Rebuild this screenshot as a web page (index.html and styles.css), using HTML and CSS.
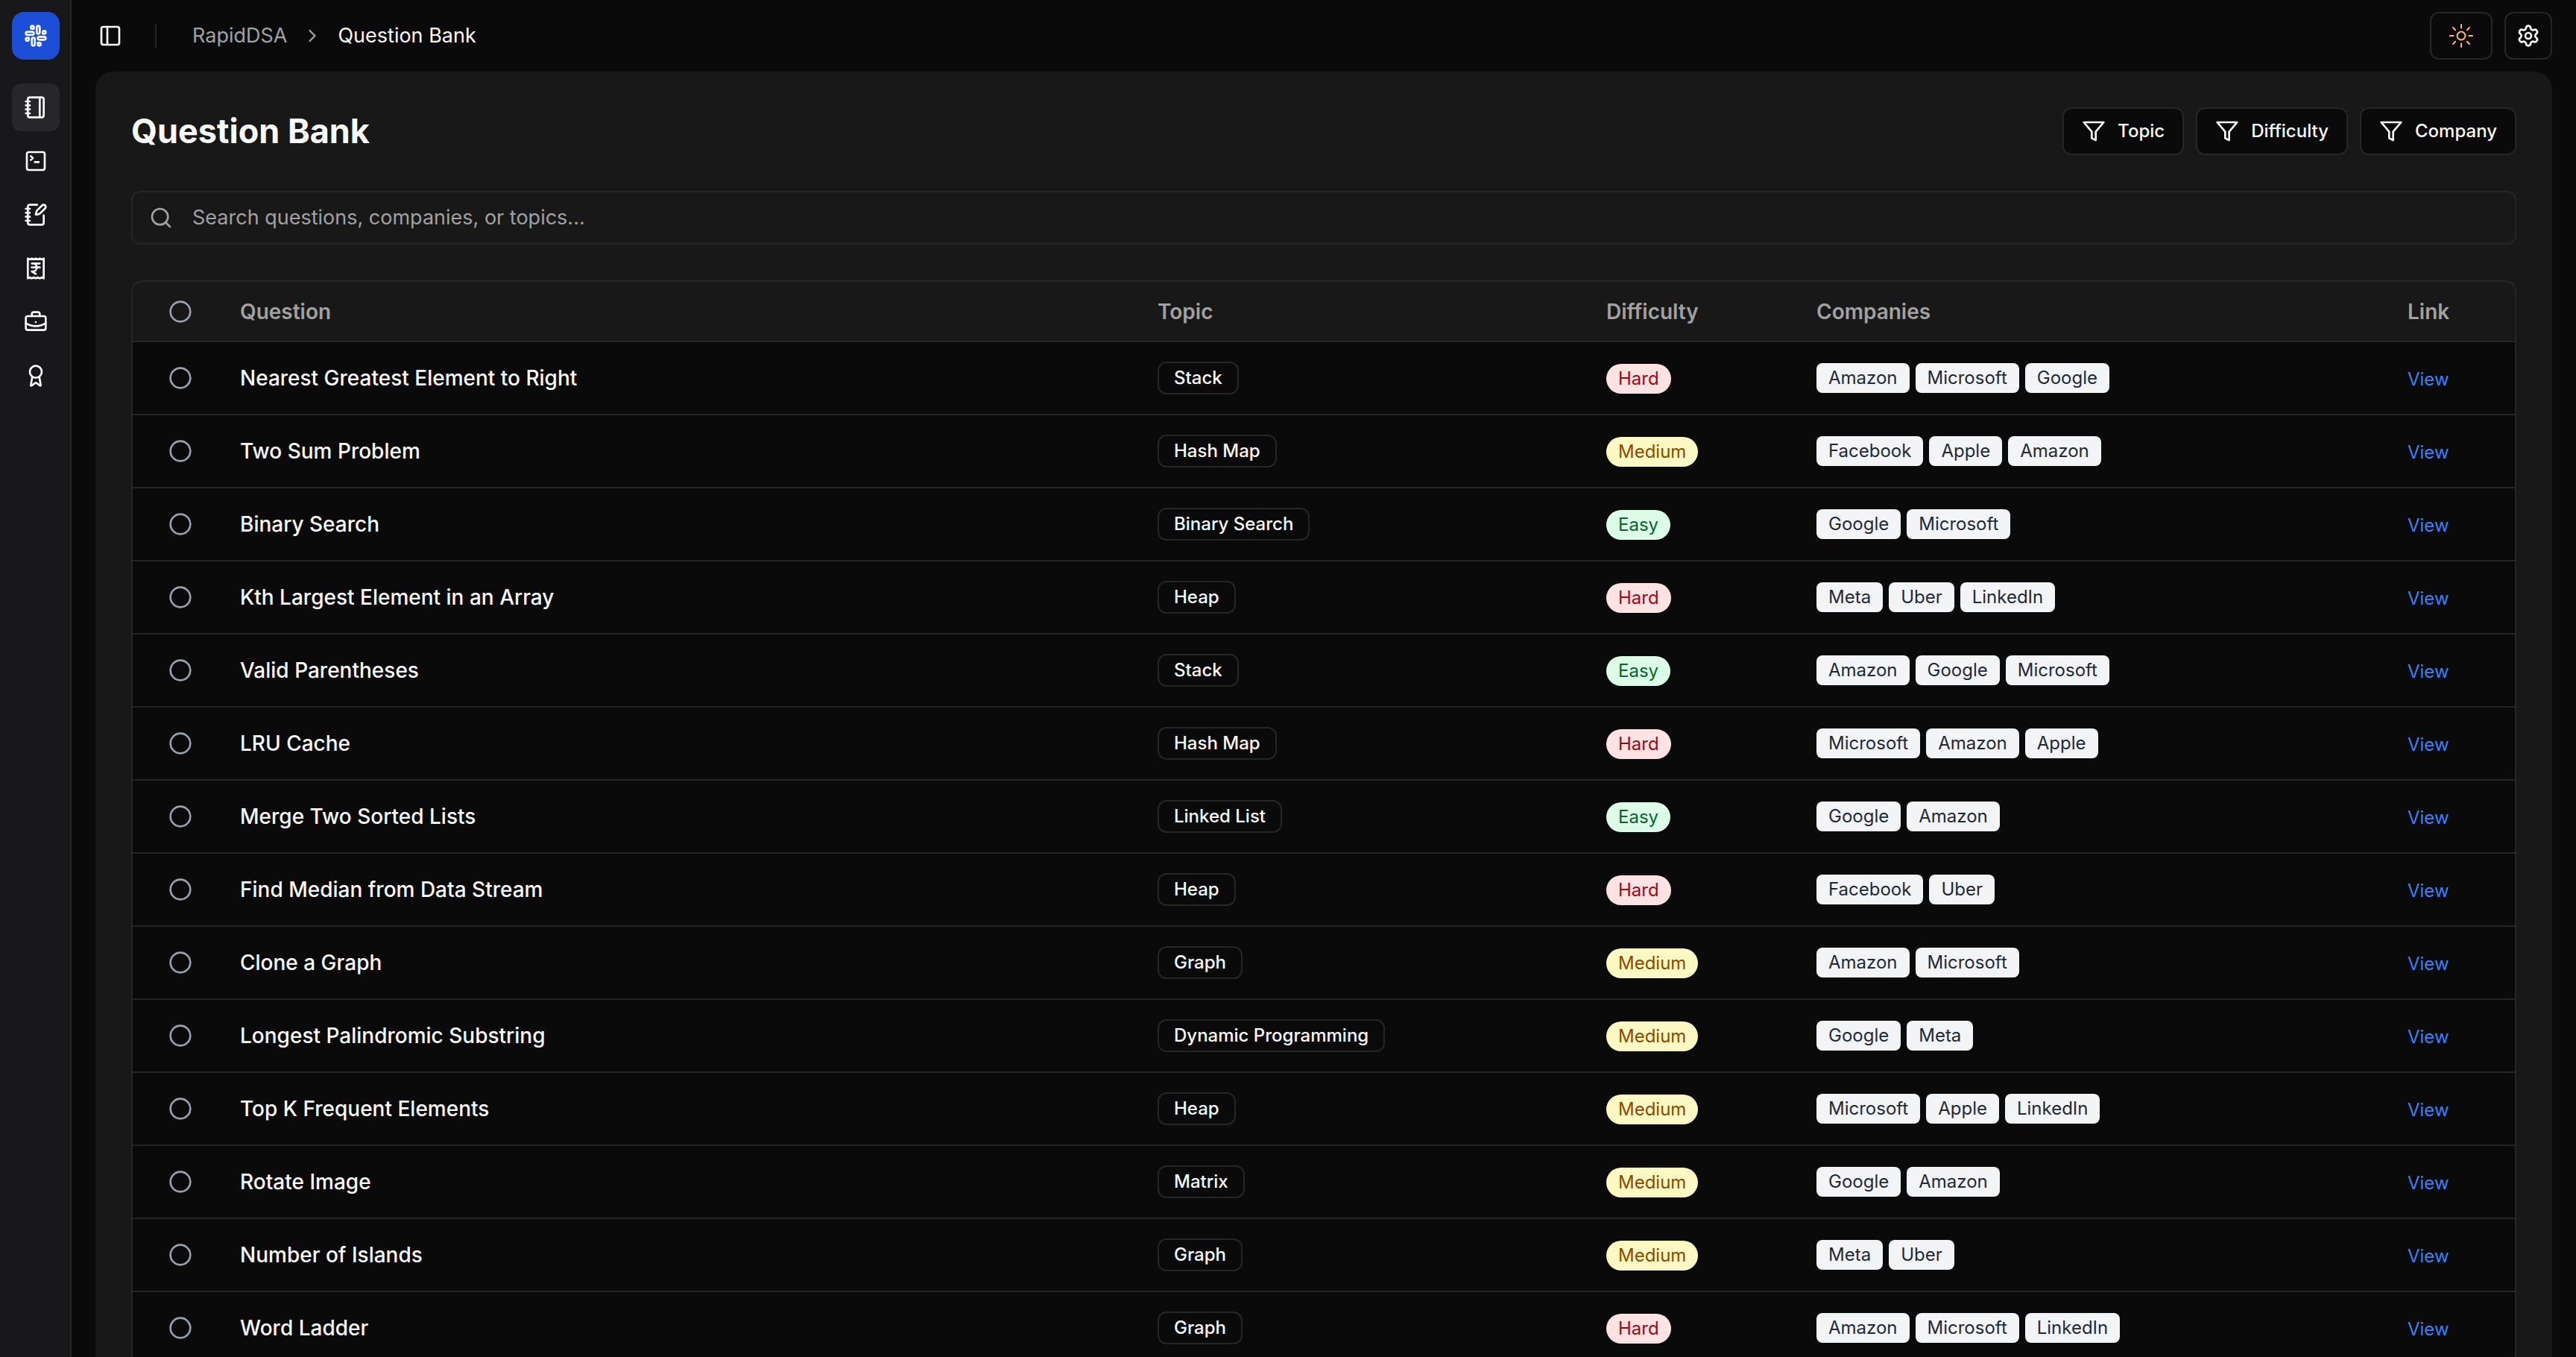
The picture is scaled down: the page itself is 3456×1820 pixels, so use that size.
FILE: index.html
```html
<!DOCTYPE html>
<html lang="en">
<head>
<meta charset="utf-8">
<meta name="viewport" content="width=device-width, initial-scale=1">
<title>Question Bank - RapidDSA</title>
<link rel="stylesheet" href="styles.css">
</head>
<body>
<svg class="sprite" aria-hidden="true">
  <symbol id="i-circle" viewBox="0 0 24 24"><circle cx="12" cy="12" r="10"/></symbol>
  <symbol id="i-filter" viewBox="0 0 24 24"><path d="M22 3H2l8 9.46V19l4 2v-8.54L22 3z"/></symbol>
</svg>
<div class="app">
  <aside class="sidebar">
    <a class="logo" href="#" aria-label="RapidDSA home">
      <svg class="icon" viewBox="0 0 24 24"><rect width="3" height="8" x="13" y="2" rx="1.5"/><path d="M19 8.5V10h1.5A1.5 1.5 0 1 0 19 8.5"/><rect width="3" height="8" x="8" y="14" rx="1.5"/><path d="M5 15.5V14H3.5A1.5 1.5 0 1 0 5 15.5"/><rect width="8" height="3" x="14" y="13" rx="1.5"/><path d="M15.5 19H14v1.5a1.5 1.5 0 1 0 1.5-1.5"/><rect width="8" height="3" x="2" y="8" rx="1.5"/><path d="M8.5 5H10V3.5A1.5 1.5 0 1 0 8.5 5"/></svg>
    </a>
    <nav class="side-nav" aria-label="Main">
      <a class="side-link active" href="#" aria-label="Question bank"><svg class="icon" viewBox="0 0 24 24"><path d="M2 6h4M2 10h4M2 14h4M2 18h4"/><rect width="16" height="20" x="4" y="2" rx="2"/><path d="M16 2v20"/></svg></a>
      <a class="side-link" href="#" aria-label="Playground"><svg class="icon" viewBox="0 0 24 24"><path d="m7 11 2-2-2-2M11 13h4"/><rect width="18" height="18" x="3" y="3" rx="2"/></svg></a>
      <a class="side-link" href="#" aria-label="Notes"><svg class="icon" viewBox="0 0 24 24"><path d="M13.4 2H6a2 2 0 0 0-2 2v16a2 2 0 0 0 2 2h12a2 2 0 0 0 2-2v-7.4M2 6h4M2 10h4M2 14h4M2 18h4"/><path d="M21.378 5.626a1 1 0 1 0-3.004-3.004l-5.01 5.012a2 2 0 0 0-.506.854l-.837 2.87a.5.5 0 0 0 .62.62l2.87-.837a2 2 0 0 0 .854-.506z"/></svg></a>
      <a class="side-link" href="#" aria-label="Billing"><svg class="icon" viewBox="0 0 24 24"><path d="M4 2v20l2-1 2 1 2-1 2 1 2-1 2 1 2-1 2 1V2l-2 1-2-1-2 1-2-1-2 1-2-1-2 1Z"/><path d="M8 7h8M12 17.5 8 15h1a4 4 0 0 0 0-8M8 11h8"/></svg></a>
      <a class="side-link" href="#" aria-label="Jobs"><svg class="icon" viewBox="0 0 24 24"><path d="M12 12h.01M16 6V4a2 2 0 0 0-2-2h-4a2 2 0 0 0-2 2v2M22 13a18.15 18.15 0 0 1-20 0"/><rect width="20" height="14" x="2" y="6" rx="2"/></svg></a>
      <a class="side-link" href="#" aria-label="Achievements"><svg class="icon" viewBox="0 0 24 24"><path d="m15.477 12.89 1.515 8.526a.5.5 0 0 1-.81.47l-3.58-2.687a1 1 0 0 0-1.197 0l-3.586 2.686a.5.5 0 0 1-.81-.469l1.514-8.526"/><circle cx="12" cy="8" r="6"/></svg></a>
    </nav>
  </aside>
  <div class="page">
    <header class="topbar">
      <button class="toggle" type="button" aria-label="Toggle sidebar"><svg class="icon" viewBox="0 0 24 24"><rect width="18" height="18" x="3" y="3" rx="2"/><path d="M9 3v18"/></svg></button>
      <span class="divider"></span>
      <nav class="crumbs" aria-label="Breadcrumb">
        <a href="#">RapidDSA</a>
        <svg class="icon chevron" viewBox="0 0 24 24"><path d="m9 18 6-6-6-6"/></svg>
        <span class="current">Question Bank</span>
      </nav>
      <div class="actions">
        <button class="btn theme" type="button" aria-label="Toggle theme"><svg class="icon sun" viewBox="0 0 32 32"><circle cx="16" cy="16" r="5.4"/><path d="M16 1v4.500M16 26.500V31M1 16h4.500M26.500 16H31M5 5l3 3.200M27 5l-3 3.200M5 27l3-3.200M27 27l-3-3.200"/></svg></button>
        <button class="btn settings" type="button" aria-label="Settings"><svg class="icon" viewBox="0 0 24 24"><path d="M9.671 4.136a2.34 2.34 0 0 1 4.659 0 2.34 2.34 0 0 0 3.319 1.915 2.34 2.34 0 0 1 2.33 4.033 2.34 2.34 0 0 0 0 3.831 2.34 2.34 0 0 1-2.33 4.033 2.34 2.34 0 0 0-3.319 1.915 2.34 2.34 0 0 1-4.659 0 2.34 2.34 0 0 0-3.32-1.915 2.34 2.34 0 0 1-2.33-4.033 2.34 2.34 0 0 0 0-3.831A2.34 2.34 0 0 1 6.35 6.051a2.34 2.34 0 0 0 3.319-1.915"/><circle cx="12" cy="12" r="3"/></svg></button>
      </div>
    </header>
    <main class="panel">
      <div class="panel-head">
        <h1>Question Bank</h1>
        <div class="filters">
          <button class="btn" type="button"><svg class="icon"><use href="#i-filter"/></svg>Topic</button>
          <button class="btn" type="button"><svg class="icon"><use href="#i-filter"/></svg>Difficulty</button>
          <button class="btn" type="button"><svg class="icon"><use href="#i-filter"/></svg>Company</button>
        </div>
      </div>
      <label class="search">
        <svg class="icon" viewBox="0 0 24 24"><circle cx="11" cy="11" r="8"/><path d="m21 21-4.300-4.300"/></svg>
        <input type="text" aria-label="Search questions" placeholder="Search questions, companies, or topics...">
      </label>
      <div class="table-box">
        <table>
          <colgroup><col class="c-check"><col><col class="c-topic"><col class="c-level"><col class="c-companies"><col class="c-link"></colgroup>
          <thead>
            <tr><th><button class="mark" type="button" aria-label="Mark all"><svg class="icon"><use href="#i-circle"/></svg></button></th><th>Question</th><th>Topic</th><th>Difficulty</th><th>Companies</th><th>Link</th></tr>
          </thead>
          <tbody id="rows"></tbody>
        </table>
      </div>
    </main>
  </div>
</div>
<script src="questions.js"></script>
</body>
</html>
```
FILE: styles.css
```css
* { box-sizing: border-box; }

body {
  margin: 0;
  background: #0a0a0a;
  color: #fafafa;
  font-family: Inter, "Liberation Sans", sans-serif;
  font-size: 28px;
  line-height: 40px;
}

a { color: inherit; text-decoration: none; }
button, input { font: inherit; color: inherit; }
button { cursor: pointer; }

.sprite { display: none; }

.icon {
  display: block;
  flex: none;
  width: 32px;
  height: 32px;
  fill: none;
  stroke: currentColor;
  stroke-width: 2;
  stroke-linecap: round;
  stroke-linejoin: round;
}

.app { display: flex; height: 100vh; overflow: hidden; }

/* Sidebar */
.sidebar {
  display: flex;
  flex: none;
  flex-direction: column;
  gap: 32px;
  width: 96px;
  padding: 16px 14px 16px 16px;
  background: #18181b;
  border-right: 2px solid #262628;
}
.side-nav { display: flex; flex-direction: column; gap: 8px; }
.logo, .side-link {
  display: grid;
  place-items: center;
  width: 64px;
  height: 64px;
  border-radius: 12px;
}
.logo { background: #1d4ed8; border-radius: 16px; }
.side-link.active { background: #27272a; }

/* Top bar */
.page { flex: 1; min-width: 0; padding: 0 32px; }
.topbar { display: flex; align-items: center; height: 96px; }
.toggle {
  display: grid;
  place-items: center;
  width: 56px;
  height: 56px;
  margin-left: -8px;
  padding: 0;
  background: none;
  border: 0;
}
.divider { width: 2px; height: 32px; margin: 0 48px 0 32px; background: #262626; }
.crumbs { display: flex; align-items: center; gap: 20px; color: #a1a1a1; font-size: 27px; }
.crumbs .current { color: #fafafa; }
.chevron { width: 28px; height: 28px; }
.actions { display: flex; gap: 16px; margin-left: auto; }

.btn {
  display: flex;
  align-items: center;
  justify-content: center;
  gap: 16px;
  height: 64px;
  padding: 0 24px;
  background: #0a0a0a;
  border: 2px solid #262626;
  border-radius: 12px;
  font-size: 24px;
  font-weight: 500;
}
.settings { width: 64px; padding: 0; }
.theme { width: 84px; }
.sun { color: #ffb86a; }

/* Panel */
.panel {
  display: flex;
  flex-direction: column;
  gap: 48px;
  padding: 48px;
  background: #181818;
  border-radius: 24px;
}
.panel-head { display: flex; align-items: center; justify-content: space-between; }
h1 { margin: 0; font-size: 45px; line-height: 64px; font-weight: 700; }
.filters { display: flex; gap: 16px; }

.search {
  display: flex;
  align-items: center;
  gap: 26px;
  height: 72px;
  padding: 0 22px;
  border: 2px solid #262626;
  border-radius: 12px;
  color: #a1a1a1;
}
.search input {
  flex: 1;
  min-width: 0;
  padding: 0;
  background: none;
  border: 0;
  outline: 0;
  color: #fafafa;
  font-size: 27px;
}
.search input::placeholder { color: #a1a1a1; opacity: 1; }

/* Questions table */
.table-box {
  background: #0a0a0a;
  border: 2px solid #262626;
  border-radius: 16px;
}
table { width: 100%; border-spacing: 0; table-layout: fixed; }
.c-check { width: 128px; }
.c-topic { width: 602px; }
.c-level { width: 282px; }
.c-companies { width: 793px; }
.c-link { width: 160px; }
thead { background: rgba(38, 38, 38, 0.5); }
th, td { padding: 0 16px; border-bottom: 2px solid #262626; text-align: left; }
th { height: 81px; color: #a1a1a1; font-weight: 600; }
td { height: 98px; font-weight: 500; }
td.low { padding-top: 2px; }
th:first-child, td:first-child { padding-left: 48px; }
.mark { display: block; padding: 0; background: none; border: 0; color: #99a1af; }

.topic, .level, .company {
  display: block;
  width: max-content;
  padding: 4px 16px;
  font-size: 24px;
  line-height: 32px;
}
.topic { padding: 4px 20px; border: 2px solid #262626; border-radius: 12px; }
.level { border-radius: 20px; font-weight: 400; }
.hard { background: #ffe2e2; color: #9f0712; }
.medium { background: #fef9c2; color: #894b00; }
.easy { background: #dcfce7; color: #016630; }
.companies { display: flex; flex-wrap: wrap; gap: 8px; }
.company { background: #f3f4f6; color: #1e2939; border-radius: 8px; font-weight: 400; }
.view { color: #3b82f6; font-size: 24px; font-weight: 400; }
```
FILE: questions.js
```javascript
const questions = [
  ["Nearest Greatest Element to Right", "Stack", "Hard", ["Amazon", "Microsoft", "Google"]],
  ["Two Sum Problem", "Hash Map", "Medium", ["Facebook", "Apple", "Amazon"]],
  ["Binary Search", "Binary Search", "Easy", ["Google", "Microsoft"]],
  ["Kth Largest Element in an Array", "Heap", "Hard", ["Meta", "Uber", "LinkedIn"]],
  ["Valid Parentheses", "Stack", "Easy", ["Amazon", "Google", "Microsoft"]],
  ["LRU Cache", "Hash Map", "Hard", ["Microsoft", "Amazon", "Apple"]],
  ["Merge Two Sorted Lists", "Linked List", "Easy", ["Google", "Amazon"]],
  ["Find Median from Data Stream", "Heap", "Hard", ["Facebook", "Uber"]],
  ["Clone a Graph", "Graph", "Medium", ["Amazon", "Microsoft"]],
  ["Longest Palindromic Substring", "Dynamic Programming", "Medium", ["Google", "Meta"]],
  ["Top K Frequent Elements", "Heap", "Medium", ["Microsoft", "Apple", "LinkedIn"]],
  ["Rotate Image", "Matrix", "Medium", ["Google", "Amazon"]],
  ["Number of Islands", "Graph", "Medium", ["Meta", "Uber"]],
  ["Word Ladder", "Graph", "Hard", ["Amazon", "Microsoft", "LinkedIn"]],
];

document.getElementById("rows").innerHTML = questions.map(([title, topic, level, companies]) => `
  <tr>
    <td><button class="mark" type="button" aria-label="Mark ${title}"><svg class="icon"><use href="#i-circle"/></svg></button></td>
    <td>${title}</td>
    <td><span class="topic">${topic}</span></td>
    <td class="low"><span class="level ${level.toLowerCase()}">${level}</span></td>
    <td><div class="companies">${companies.map((name) => `<span class="company">${name}</span>`).join("")}</div></td>
    <td class="low"><a class="view" href="#">View</a></td>
  </tr>`).join("");
```
